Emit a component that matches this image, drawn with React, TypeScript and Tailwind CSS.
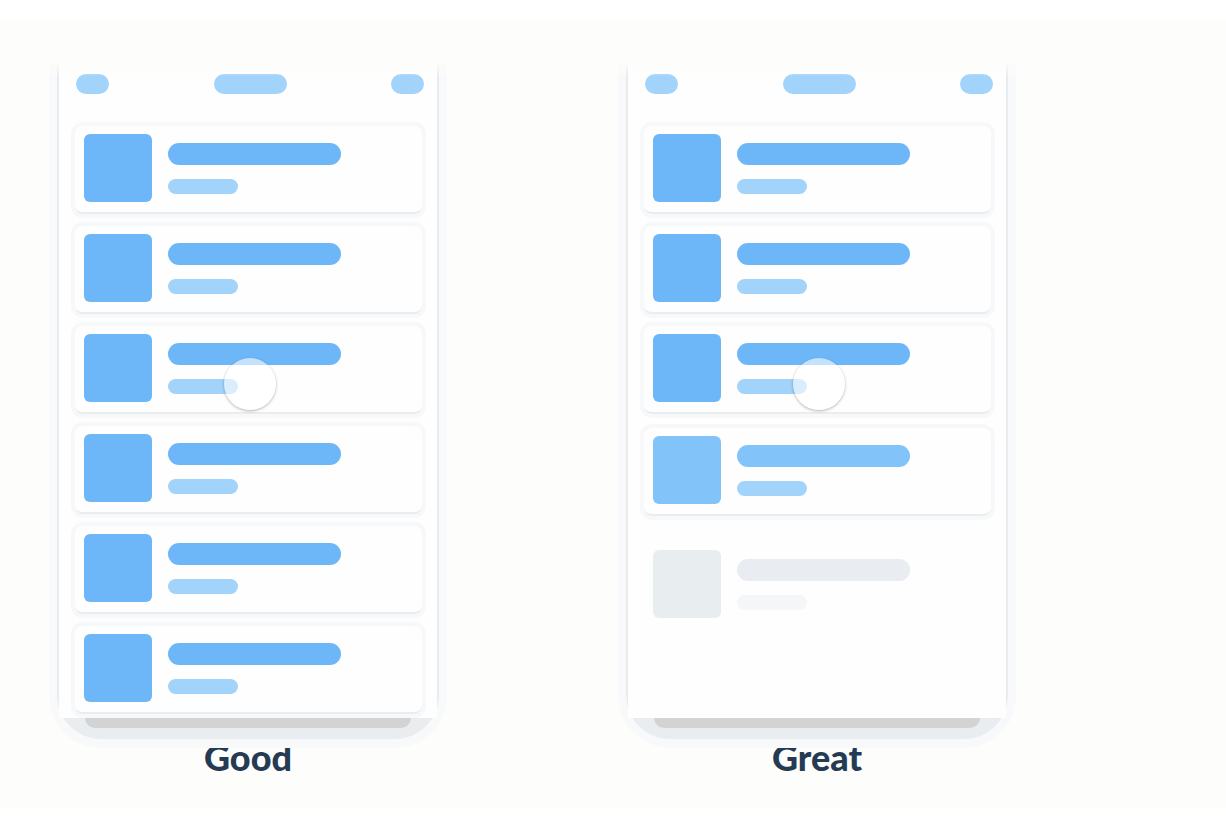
import React from 'react';

type Row = { tone: 'solid' | 'fading' | 'skeleton'; touch?: boolean; shift?: string };

const goodRows: Row[] = [
  { tone: 'solid' },
  { tone: 'solid' },
  { tone: 'solid', touch: true },
  { tone: 'solid' },
  { tone: 'solid' },
  { tone: 'solid' },
];

const greatRows: Row[] = [
  { tone: 'solid' },
  { tone: 'solid' },
  { tone: 'solid', touch: true },
  { tone: 'fading', shift: 'mt-[2px]' },
  { tone: 'skeleton', shift: 'mt-[14px]' },
];

const ListRow: React.FC<{ row: Row }> = ({ row }) => {
  const isSkeleton = row.tone === 'skeleton';
  const thumb = row.tone === 'solid' ? 'bg-[#6db7f9]' : row.tone === 'fading' ? 'bg-[#82c3fa]' : 'bg-[#e8edf0]';
  const title = row.tone === 'solid' ? 'bg-[#6db7f9]' : row.tone === 'fading' ? 'bg-[#82c3fa]' : 'bg-[#e9edf1]';
  const sub = isSkeleton ? 'bg-[#f4f6f7]' : 'bg-[#a2d3fa]';

  return (
    <div
      className={
        'relative ml-[16px] w-[347px] h-[88px] rounded-[8px] flex gap-[16px] pl-[9px] pt-[8px] ' +
        (isSkeleton
          ? ''
          : 'bg-[#fefefe] border-b-2 border-[#e9edf0] shadow-[0_0_0_4px_#f7f8f9]') +
        ' ' +
        (row.shift ?? '')
      }
    >
      <div className={'w-[68px] h-[68px] rounded-[6px] shrink-0 ' + thumb} />
      <div className="flex flex-col pt-[9px]">
        <div className={'w-[173px] h-[22px] rounded-full ' + title} />
        <div className={'mt-[14px] w-[70px] h-[15px] rounded-full ' + sub} />
      </div>
      {row.touch && (
        <div className="absolute left-[149px] top-[32px] w-[52px] h-[52px] rounded-full bg-white/60 shadow-[0_1px_3px_rgba(0,0,0,0.3)]" />
      )}
    </div>
  );
};

const Phone: React.FC<{ rows: Row[]; label: string }> = ({ rows, label }) => (
  <div className="flex flex-col items-center w-[398px]">
    <div className="w-full px-[8px] pb-[9px] rounded-b-[52px] bg-[#f8f9fa] [mask-image:linear-gradient(to_bottom,transparent,black_14px)]">
      <div className="border-x-2 border-[#e8ecef] bg-[#e9edf0] rounded-b-[44px] pb-[11px]">
        <div className="h-[656px] bg-[#fefefe] pt-[12px]">
          <div className="flex items-center justify-between ml-[17px] mr-[13px]">
            <div className="w-[33px] h-[20px] rounded-full bg-[#a2d3fa]" />
            <div className="w-[73px] h-[20px] rounded-full bg-[#a2d3fa]" />
            <div className="w-[33px] h-[20px] rounded-full bg-[#a2d3fa]" />
          </div>
          <div className="mt-[32px] flex flex-col gap-[12px]">
            {rows.map((r, i) => (
              <ListRow key={i} row={r} />
            ))}
          </div>
        </div>
        <div className="mx-[26px] h-[10px] rounded-b-[28px] bg-[#d3d3d3]" />
      </div>
    </div>
    <div className="-mt-[9px] text-[36px] leading-none font-black text-[#243b53] font-['Lato','Open_Sans',sans-serif]">
      {label}
    </div>
  </div>
);

export default function App() {
  return (
    <div className="w-[1226px] h-[836px] bg-white overflow-hidden">
      <div className="mt-[20px] h-[788px] bg-[#fdfdfb] flex items-start pl-[49px] pt-[42px] gap-[171px]">
        <Phone rows={goodRows} label="Good" />
        <Phone rows={greatRows} label="Great" />
      </div>
    </div>
  );
}
